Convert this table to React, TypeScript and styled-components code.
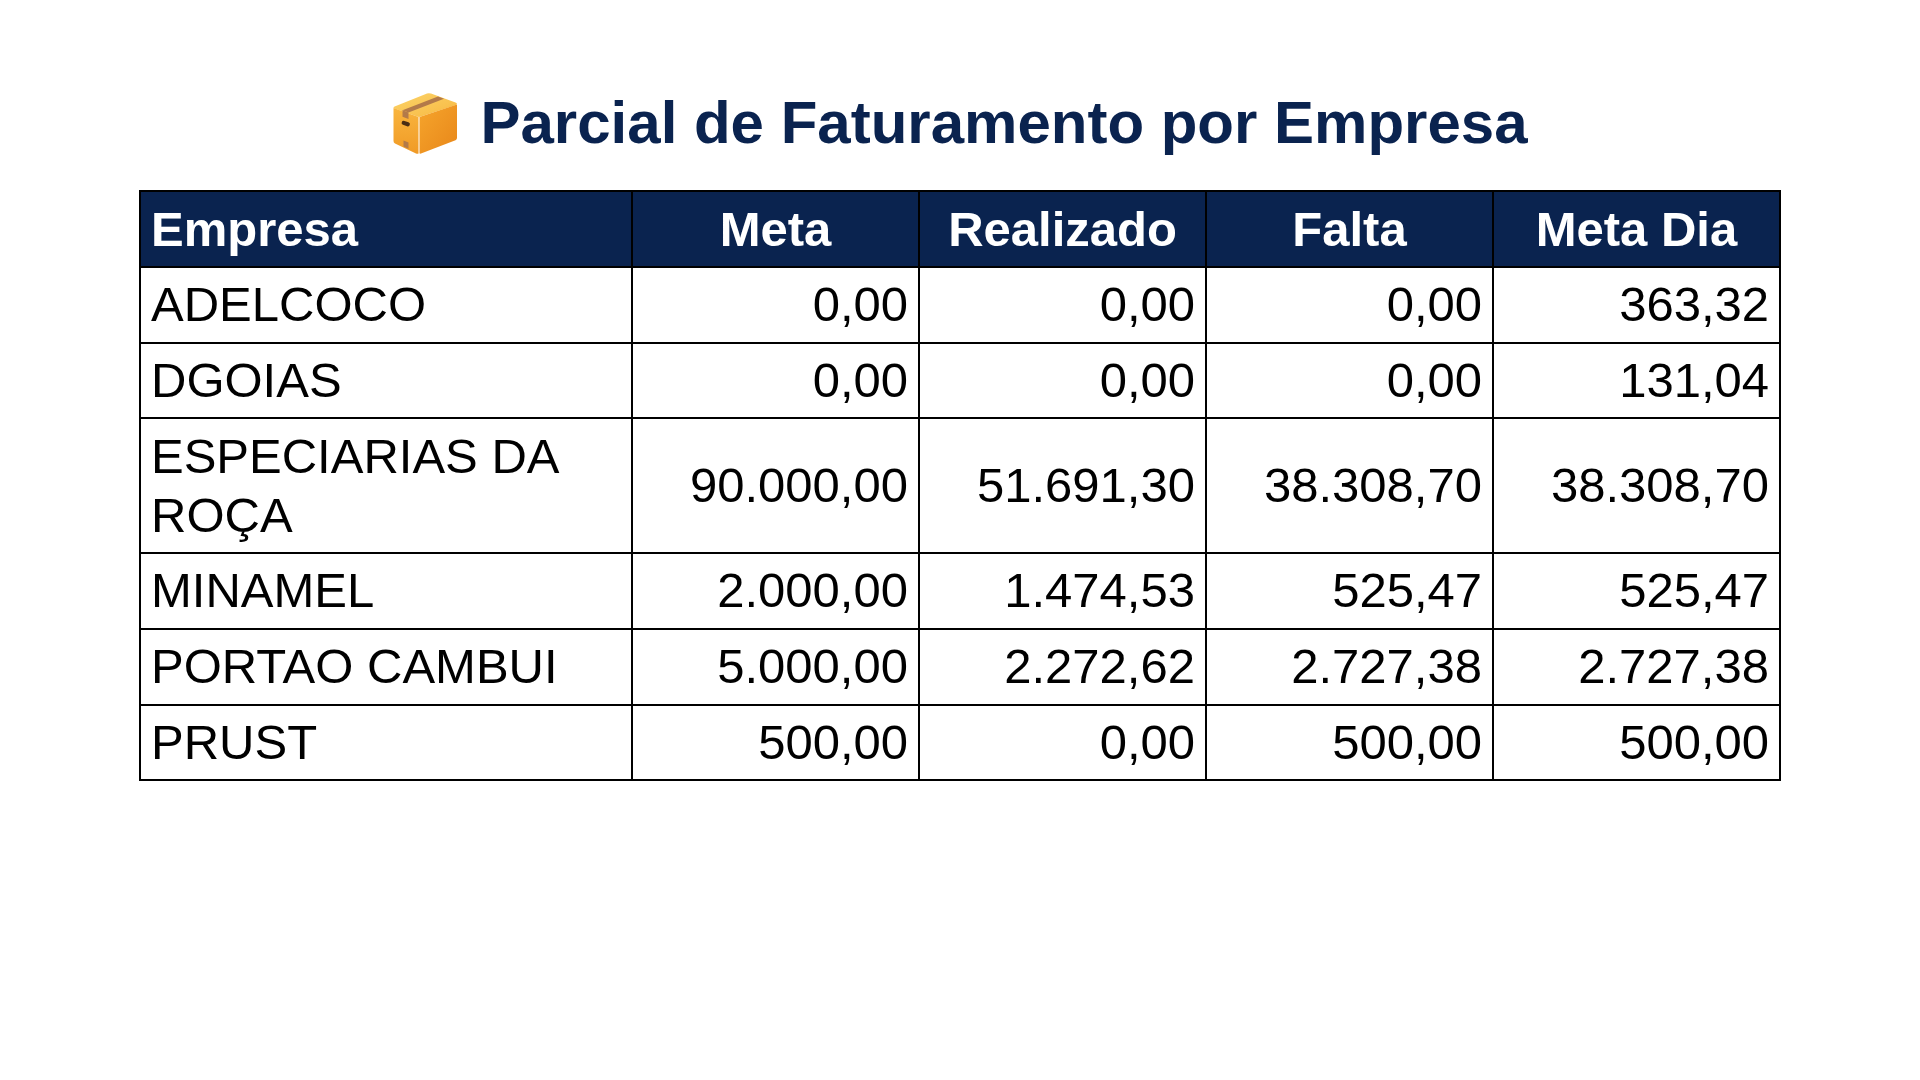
import React from "react";
import styled, { createGlobalStyle } from "styled-components";

const GlobalStyle = createGlobalStyle`
  html, body {
    margin: 0;
    padding: 0;
    background: #ffffff;
    font-family: "Liberation Sans", Arial, sans-serif;
  }
`;

const Page = styled.div`
  width: 1920px;
  min-height: 1080px;
  padding-top: 89px;
  box-sizing: border-box;
  display: flex;
  flex-direction: column;
  align-items: center;
`;

const Title = styled.h1`
  margin: 0 0 34px 0;
  display: flex;
  align-items: center;
  gap: 22px;
  font-family: "Liberation Sans", Arial, sans-serif;
  font-weight: 700;
  font-size: 60px;
  line-height: 67px;
  color: #0a234f;
`;

const Table = styled.table`
  width: 1640px;
  border-collapse: collapse;
  table-layout: fixed;
  font-family: "Liberation Sans", Arial, sans-serif;
  font-size: 49px;
  line-height: 58.8px;
`;

const HeadCell = styled.th<{ $align: "left" | "center" }>`
  background: #0a234f;
  color: #ffffff;
  font-weight: 700;
  text-align: ${(p) => p.$align};
  border: 2px solid #000000;
  padding: 7.5px 10px;
`;

const Cell = styled.td<{ $align: "left" | "right" }>`
  color: #000000;
  font-weight: 400;
  text-align: ${(p) => p.$align};
  vertical-align: middle;
  border: 2px solid #000000;
  padding: 7.5px 10px;
  background: #ffffff;
`;

const BoxIcon = () => (
  <svg width="66" height="62" viewBox="0 0 66 62" aria-hidden="true">
    <defs>
      <linearGradient id="topG" x1="0" y1="0" x2="1" y2="1">
        <stop offset="0" stopColor="#fcd46a" />
        <stop offset="1" stopColor="#f7b841" />
      </linearGradient>
      <linearGradient id="leftG" x1="0" y1="0" x2="0" y2="1">
        <stop offset="0" stopColor="#f9b53e" />
        <stop offset="1" stopColor="#f09a26" />
      </linearGradient>
      <linearGradient id="rightG" x1="0" y1="0" x2="1" y2="1">
        <stop offset="0" stopColor="#f6a52c" />
        <stop offset="1" stopColor="#e8871a" />
      </linearGradient>
    </defs>
    <path
      d="M35 1.5 Q37 1 39 1.6 L63.5 10.6 Q66 11.6 64 13 L29 24.6 Q27 25.3 25 24.6 L2.5 16.6 Q0.5 15.6 2.6 14.6 Z"
      fill="url(#topG)"
    />
    <path
      d="M1.5 16 L26.5 25 L26.5 61.5 Q25.5 62 24 61.4 L3 51.5 Q1.5 50.8 1.5 49 Z"
      fill="url(#leftG)"
    />
    <path
      d="M27.5 25 L65 12.5 L65 46 Q65 47.5 63.5 48.2 L29 61.6 Q27.5 62 27.5 61 Z"
      fill="url(#rightG)"
    />
    <path d="M46 4.5 L52 6.7 L16.5 20.5 L10.5 18.3 Z" fill="#b37a49" />
    <path d="M10.5 18.3 L16.5 20.5 L16.5 27 L10.5 24.8 Z" fill="#b37a49" />
    <path d="M11.5 48.5 L16.5 50.6 L16.5 56.8 L11.5 54.6 Z" fill="#b37a49" />
    <rect
      x="9.5"
      y="29.5"
      width="8.5"
      height="4.2"
      rx="2.1"
      transform="rotate(20 13.75 31.6)"
      fill="#4a2d14"
    />
  </svg>
);

type Row = {
  empresa: string;
  meta: string;
  realizado: string;
  falta: string;
  metaDia: string;
};

const rows: Row[] = [
  { empresa: "ADELCOCO", meta: "0,00", realizado: "0,00", falta: "0,00", metaDia: "363,32" },
  { empresa: "DGOIAS", meta: "0,00", realizado: "0,00", falta: "0,00", metaDia: "131,04" },
  {
    empresa: "ESPECIARIAS DA ROÇA",
    meta: "90.000,00",
    realizado: "51.691,30",
    falta: "38.308,70",
    metaDia: "38.308,70",
  },
  { empresa: "MINAMEL", meta: "2.000,00", realizado: "1.474,53", falta: "525,47", metaDia: "525,47" },
  {
    empresa: "PORTAO CAMBUI",
    meta: "5.000,00",
    realizado: "2.272,62",
    falta: "2.727,38",
    metaDia: "2.727,38",
  },
  { empresa: "PRUST", meta: "500,00", realizado: "0,00", falta: "500,00", metaDia: "500,00" },
];

export default function App() {
  return (
    <>
      <GlobalStyle />
      <Page>
        <Title>
          <BoxIcon />
          <span>Parcial de Faturamento por Empresa</span>
        </Title>
        <Table>
          <colgroup>
            <col style={{ width: 492 }} />
            <col style={{ width: 287 }} />
            <col style={{ width: 287 }} />
            <col style={{ width: 287 }} />
            <col style={{ width: 287 }} />
          </colgroup>
          <thead>
            <tr>
              <HeadCell $align="left">Empresa</HeadCell>
              <HeadCell $align="center">Meta</HeadCell>
              <HeadCell $align="center">Realizado</HeadCell>
              <HeadCell $align="center">Falta</HeadCell>
              <HeadCell $align="center">Meta Dia</HeadCell>
            </tr>
          </thead>
          <tbody>
            {rows.map((r) => (
              <tr key={r.empresa}>
                <Cell $align="left">{r.empresa}</Cell>
                <Cell $align="right">{r.meta}</Cell>
                <Cell $align="right">{r.realizado}</Cell>
                <Cell $align="right">{r.falta}</Cell>
                <Cell $align="right">{r.metaDia}</Cell>
              </tr>
            ))}
          </tbody>
        </Table>
      </Page>
    </>
  );
}
